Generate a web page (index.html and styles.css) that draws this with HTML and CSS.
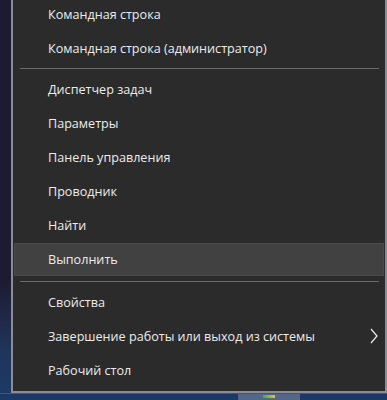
FILE: index.html
```html
<!DOCTYPE html>
<html lang="ru">
<head>
<meta charset="utf-8">
<link rel="stylesheet" href="styles.css">
</head>
<body>
<div class="screen">
  <div class="menu">
    <div class="item">Командная строка</div>
    <div class="item">Командная строка (администратор)</div>
    <div class="sep"></div>
    <div class="item">Диспетчер задач</div>
    <div class="item">Параметры</div>
    <div class="item">Панель управления</div>
    <div class="item">Проводник</div>
    <div class="item">Найти</div>
    <div class="item active">Выполнить</div>
    <div class="sep"></div>
    <div class="item">Свойства</div>
    <div class="item sub">Завершение работы или выход из системы
      <svg class="chev" width="8" height="16" viewBox="0 0 8 16"><path d="M1 1 L7 8 L1 15" fill="none" stroke="#e6e6e6" stroke-width="1.3"/></svg>
    </div>
    <div class="item">Рабочий стол</div>
  </div>
  <div class="taskbar">
    <div class="tb-left"></div>
    <div class="tb-app"><span class="tb-icon"></span></div>
  </div>
</div>
</body>
</html>
```
FILE: styles.css
```css
html, body {
  margin: 0;
  padding: 0;
}
body {
  width: 387px;
  height: 400px;
  overflow: hidden;
  background: linear-gradient(to bottom, #1d1b31 0%, #1d1b31 70%, #20355a 88%, #1c3a66 100%);
  font-family: "Open Sans", "Noto Sans", sans-serif;
}
.screen {
  display: flex;
  flex-direction: column;
  height: 400px;
}
.menu {
  margin-top: -3px;
  margin-left: 11px;
  width: 372px;
  background: #2b2b2b;
  border: 2px solid #8c8c94;
  border-top: none;
  padding-bottom: 4px;
  display: flex;
  flex-direction: column;
}
.item {
  height: 34px;
  display: flex;
  align-items: center;
  padding-left: 35px;
  color: #ececec;
  font-size: 12.6px;
  position: relative;
}
.item.active {
  height: 33px;
  margin: 1px 1px 2px;
  background: #414141;
  box-shadow: inset 0 0 0 1px #4a4a4a;
  padding-left: 34px;
}
.sep {
  height: 1px;
  background: #6b6b6b;
  margin: 3px 6px 3px 7px;
}
.sub .chev {
  position: absolute;
  right: 7px;
  top: 9px;
}
.taskbar {
  flex: 1;
  display: flex;
  background: #1b3866;
  border-top: 1px solid #3f5877;
}
.tb-left {
  width: 238px;
}
.tb-app {
  width: 62px;
  background: #52678a;
  display: flex;
  justify-content: center;
}
.tb-icon {
  width: 12px;
  height: 3px;
  margin-top: 1px;
  background: linear-gradient(to right, #2bb34a, #e8c234);
}
```
